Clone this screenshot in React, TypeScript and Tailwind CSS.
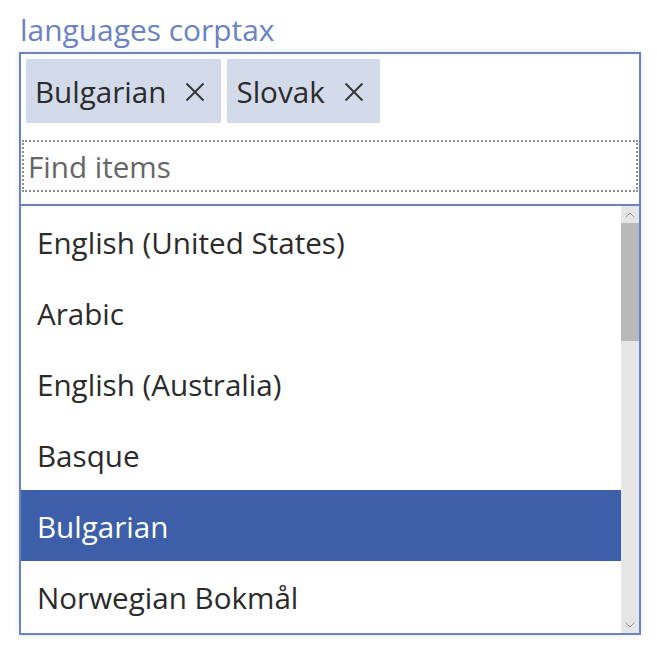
import React from "react";

const items = [
  "English (United States)",
  "Arabic",
  "English (Australia)",
  "Basque",
  "Bulgarian",
  "Norwegian Bokmål",
];

function X() {
  return (
    <svg width="20" height="20" viewBox="0 0 20 20" className="shrink-0">
      <path d="M1.5 1.5 L18.5 18.5 M18.5 1.5 L1.5 18.5" stroke="#333" strokeWidth="1.8" fill="none" />
    </svg>
  );
}

export default function App() {
  return (
    <div
      className="w-[657px] h-[648px] bg-white pt-[11px] pl-[19px]"
      style={{ fontFamily: '"Open Sans", sans-serif' }}
    >
      <div className="text-[29.9px] leading-[38px] text-[#6a82c4] pl-[1px] h-[41px]">languages corptax</div>
      <div className="w-[622px] h-[583px] border-2 border-[#6a84c2] flex flex-col shadow-[0_0_6px_rgba(0,0,0,0.12)]">
        <div className="flex gap-[6px] pt-[5px] pl-[5px] h-[86px]">
          {["Bulgarian", "Slovak"].map((t) => (
            <div key={t} className="h-[64px] bg-[#d3daea] flex items-center pt-[2px] pl-[9px] pr-[16px] gap-[19px] text-[29.6px] text-[#2b2b2b]">
              <span>{t}</span>
              <X />
            </div>
          ))}
        </div>
        <div className="mx-[1px] h-[52px] border-2 border-dotted border-[#8f8f8f] flex items-center pt-[2px] pl-[4px] text-[29.6px] text-[#666]">
          Find items
        </div>
        <div className="h-[12px]" />
        <div className="border-t-2 border-[#6a84c2] flex flex-1 min-h-0 overflow-hidden">
          <div className="flex-1 flex flex-col">
            {items.map((t) => (
              <div
                key={t}
                className={
                  "h-[71px] shrink-0 flex items-center pt-[3px] pl-[16px] text-[29.6px] " +
                  (t === "Bulgarian" ? "bg-[#3d5fa9] text-white" : "text-[#2b2b2b]")
                }
              >
                {t}
              </div>
            ))}
          </div>
          <div className="w-[18px] bg-[#e6e6e6] flex flex-col">
            <div className="h-[17px] flex items-center justify-center">
              <svg width="10" height="6" viewBox="0 0 10 6">
                <path d="M0.5 5.5 L5 1 L9.5 5.5" stroke="#9a9a9a" strokeWidth="1" fill="none" />
              </svg>
            </div>
            <div className="h-[118px] bg-[#b9b9b9]" />
            <div className="flex-1" />
            <div className="h-[17px] flex items-center justify-center">
              <svg width="10" height="6" viewBox="0 0 10 6">
                <path d="M0.5 0.5 L5 5 L9.5 0.5" stroke="#9a9a9a" strokeWidth="1" fill="none" />
              </svg>
            </div>
          </div>
        </div>
      </div>
    </div>
  );
}
